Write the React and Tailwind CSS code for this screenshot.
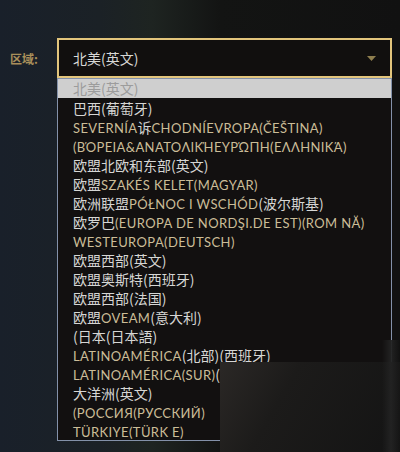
import React from "react";

const regions = [
  "巴西(葡萄牙)",
  "SEVERNÍA诉CHODNÍEVROPA(ČEŠTINA)",
  "(ΒΌΡΕΙΑ&ΑΝΑΤΟΛΙΚΉΕΥΡΏΠΗ(ΕΛΛΗΝΙΚΆ)",
  "欧盟北欧和东部(英文)",
  "欧盟SZAKÉS KELET(MAGYAR)",
  "欧洲联盟PÓŁNOC I WSCHÓD(波尔斯基)",
  "欧罗巴(EUROPA DE NORDŞI.DE EST)(ROM NĂ)",
  "WESTEUROPA(DEUTSCH)",
  "欧盟西部(英文)",
  "欧盟奥斯特(西班牙)",
  "欧盟西部(法国)",
  "欧盟OVEAM(意大利)",
  "(日本(日本語)",
  "LATINOAMÉRICA(北部)(西班牙)",
  "LATINOAMÉRICA(SUR)(西班牙)",
  "大洋洲(英文)",
  "(РОССИЯ(РУССКИЙ)",
  "TÜRKIYE(TÜRK E)",
];

const isCjk = (c) => /[\u3000-\u9fff\uff00-\uffef]/.test(c);

// split a label into runs of chinese and latin text
function splitRuns(text) {
  const chars = [...text];
  const runs = [];
  chars.forEach((c, i) => {
    let cjk;
    if (c === "(") cjk = i + 1 < chars.length ? isCjk(chars[i + 1]) : false;
    else if (c === ")") cjk = i > 0 ? isCjk(chars[i - 1]) : false;
    else cjk = isCjk(c);
    const last = runs[runs.length - 1];
    if (last && last.cjk === cjk) last.text += c;
    else runs.push({ cjk, text: c });
  });
  return runs;
}

function Label({ text }) {
  return (
    <span className="whitespace-nowrap">
      {splitRuns(text).map((r, i) =>
        r.cjk ? (
          <span
            key={i}
            className="text-[14px] text-[#d6d6d4] font-['Noto_Sans_CJK_SC',sans-serif]"
          >
            {r.text}
          </span>
        ) : (
          <span
            key={i}
            className="text-[13px] text-[#cbbd98] tracking-[0.03em] font-['Lato','Noto_Sans_CJK_SC',sans-serif]"
          >
            {r.text}
          </span>
        )
      )}
    </span>
  );
}

export default function App() {
  return (
    <div className="relative w-[400px] h-[452px] overflow-hidden bg-[linear-gradient(90deg,#19202a_0%,#1b2126_25%,#1e2421_38%,#131413_55%,#111111_100%)]">
      <div className="flex items-start pt-[38px] pl-[10px]">
        <div className="w-[47px] h-[41px] flex items-center">
          <span className="text-[12px] font-bold text-[#a98f5a] font-['Noto_Sans_CJK_SC',sans-serif]">
            区域:
          </span>
        </div>
        <div className="w-[335px]">
          <div className="h-[40px] border-2 border-[#e2c57c] bg-[#110f0e] flex items-center justify-between pl-[14px] pr-[14px]">
            <span className="text-[14px] text-[#d8d8d6] font-['Noto_Sans_CJK_SC',sans-serif]">
              北美(英文)
            </span>
            <svg width="9" height="5" viewBox="0 0 9 5">
              <path d="M0 0h9L4.5 5z" fill="#8e7e4e" />
            </svg>
          </div>
          <div className="border border-[#8391a9] bg-[#121010]">
            <div className="h-[19px] bg-[#cfcfcf] pl-[15px] flex items-center">
              <span className="text-[14px] text-[#9c9c9c] font-['Noto_Sans_CJK_SC',sans-serif]">
                北美(英文)
              </span>
            </div>
            {regions.map((r) => (
              <div key={r} className="h-[19px] pl-[15px] flex items-center overflow-hidden">
                <Label text={r} />
              </div>
            ))}
          </div>
        </div>
      </div>
      <div className="absolute left-[220px] top-[362px] right-0 bottom-0 bg-[linear-gradient(120deg,#2b2826_0%,#1c1b1a_35%,#141414_100%)]" />
      <div className="absolute left-[382px] top-[340px] w-[18px] bottom-0 bg-[linear-gradient(90deg,transparent,#222222_50%,transparent)]" />
    </div>
  );
}
